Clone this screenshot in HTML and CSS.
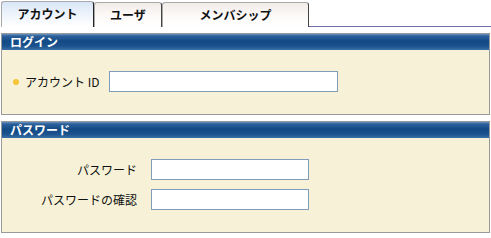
FILE: index.html
```html
<!DOCTYPE html>
<html lang="ja">
<head>
    <meta charset="UTF-8">
    <title>アカウント</title>
    <link rel="stylesheet" href="styles.css">
</head>
<body>
<div class="tabs">
    <div class="tab active">アカウント</div>
    <div class="tab t2">ユーザ</div>
    <div class="tab t3">メンバシップ</div>
    <div class="tabline"></div>
</div>

<div class="panel login">
    <div class="head">ログイン</div>
    <div class="body">
        <div class="row">
            <span class="dot"></span>
            <label class="lbl">アカウント ID</label>
            <input class="txt wide" type="text">
        </div>
    </div>
</div>

<div class="panel pass">
    <div class="head">パスワード</div>
    <div class="body">
        <div class="grid">
            <label>パスワード</label>
            <input class="txt" type="password">
            <label>パスワードの確認</label>
            <input class="txt" type="password">
        </div>
    </div>
</div>
</body>
</html>
```

FILE: styles.css
```css
html,body{
    margin:0;
    padding:0;
    background:#fff;
}
body{
    font-family:"Noto Sans CJK JP","Liberation Sans",sans-serif;
    font-size:12px;
    color:#111;
    width:491px;
}
.tabs{
    display:flex;
    align-items:flex-end;
    height:27px;
    padding-left:1px;
    box-sizing:border-box;
}
.tab{
    box-sizing:border-box;
    height:25px;
    border:1px solid #a9a9a9;
    border-right-color:#444;
    border-bottom:none;
    border-radius:3px 3px 0 0;
    background:linear-gradient(#f2ece8,#fdfbfa 60%,#fff);
    text-align:center;
    font-weight:bold;
    line-height:23px;
    font-size:12px;
}
.tab.active{
    width:93px;
    height:26px;
    background:linear-gradient(#d9e6f7,#eef4fc 50%,#fff);
    border-right-color:#222;
}
.t2{
    width:68px;
}
.t3{
    width:147px;
}
.tabline{
    flex:1;
    height:1px;
    margin-bottom:0;
    border-bottom:1px solid #6e6ea8;
}
.panel{
    margin:6px 1px 0 1px;
    border:1px solid #9a9a9a;
    background:#f7f2d7;
}
.pass{
    margin-top:6px;
}
.head{
    height:16px;
    line-height:15px;
    padding-left:8px;
    color:#fff;
    font-weight:bold;
    background:linear-gradient(#6b93c2 0,#2d619b 12%,#124a85 45%,#1b528d 75%,#3a6ea6 100%);
}
.body{
    padding:21px 0 22px 0;
}
.row{
    display:flex;
    align-items:center;
    height:21px;
}
.dot{
    width:6px;
    height:6px;
    border-radius:50%;
    background:#f7c437;
    margin-left:11px;
}
.lbl{
    margin-left:6px;
    width:84px;
}
.txt{
    box-sizing:border-box;
    height:21px;
    border:1px solid #7f9db9;
    background:#fff;
    margin:0;
    padding:0 3px;
    font-size:12px;
}
.wide{
    width:229px;
}
.grid{
    display:grid;
    grid-template-columns:135px 158px;
    column-gap:14px;
    row-gap:9px;
    align-items:center;
}
.grid label{
    text-align:right;
}
.grid .txt{
    width:158px;
}
```
